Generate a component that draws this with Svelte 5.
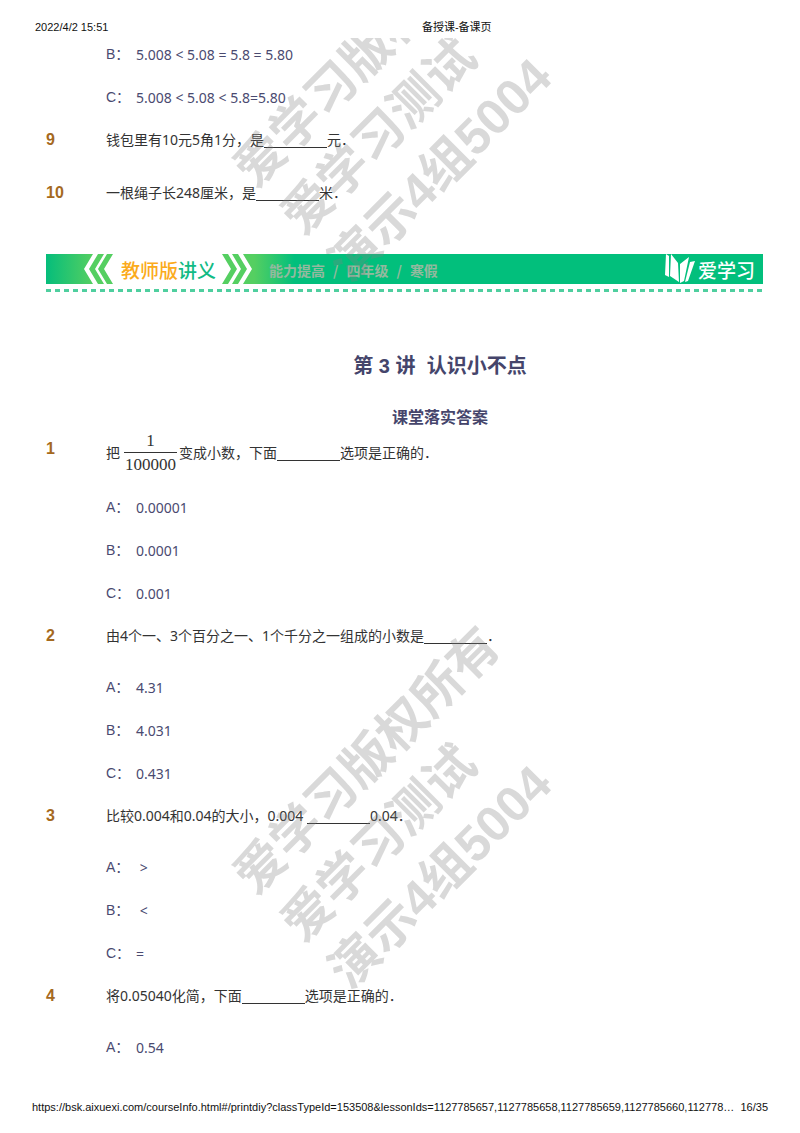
<script>
  const BLANK = { blank: true };

  //The tail of the previous lesson's answers.
  const previous = [
    { options: [['B', '5.008 < 5.08 = 5.8 = 5.80'], ['C', '5.008 < 5.08 < 5.8=5.80']] },
    { number: 9, parts: ['钱包里有10元5角1分，是', BLANK, '元．'] },
    { number: 10, parts: ['一根绳子长248厘米，是', BLANK, '米．'] }
  ];

  const current = [
    {
      number: 1,
      parts: ['把', { top: '1', bottom: '100000' }, '变成小数，下面', BLANK, '选项是正确的．'],
      options: [['A', '0.00001'], ['B', '0.0001'], ['C', '0.001']]
    },
    {
      number: 2,
      parts: ['由4个一、3个百分之一、1个千分之一组成的小数是', BLANK, '．'],
      options: [['A', '4.31'], ['B', '4.031'], ['C', '0.431']]
    },
    {
      number: 3,
      parts: ['比较0.004和0.04的大小，0.004 ', BLANK, '0.04．'],
      options: [['A', '\u00a0>'], ['B', '\u00a0<'], ['C', '=']]
    },
    {
      number: 4,
      parts: ['将0.05040化简，下面', BLANK, '选项是正确的．'],
      options: [['A', '0.54']]
    }
  ];

  const course = ['能力提高', '/', '四年级', '/', '寒假'];
  const url = 'https://bsk.aixuexi.com/courseInfo.html#/printdiy?classTypeId=153508&lessonIds=1127785657,1127785658,1127785659,1127785660,112778…';
</script>

{#snippet questions(list)}
  <ol>
    {#each list as q}
      <li class="item" class:plain={!q.options}>
        {#if q.parts}
          <div class="question">
            <span class="number">{q.number}</span>
            <p>{#each q.parts as part}{#if part.blank}<span class="blank"></span>{:else if part.top}<span class="fraction"><span>{part.top}</span><span class="denominator">{part.bottom}</span></span>{:else}{part}{/if}{/each}</p>
          </div>
        {/if}
        {#if q.options}
          <ul class:first={!q.parts}>
            {#each q.options as [letter, text]}
              <li><span class="letter">{letter}：</span><span>{text}</span></li>
            {/each}
          </ul>
        {/if}
      </li>
    {/each}
  </ol>
{/snippet}

{#snippet watermark()}
  <div class="stamp">爱学习版权所有<br />爱学习测试<br />演示4组5004</div>
{/snippet}

<div class="page">
  <header>
    <span>2022/4/2 15:51</span>
    <span>备授课-备课页</span>
  </header>

  <main>
    {@render questions(previous)}

    <div class="banner">
      <svg class="edge" width="68" height="30" viewBox="0 0 68 30" aria-hidden="true">
        <defs>
          <linearGradient id="fade">
            <stop offset="0" stop-color="#05bd7b" />
            <stop offset="1" stop-color="#55cf61" />
          </linearGradient>
        </defs>
        <path fill="url(#fade)" d="M0 0H47L38 15L47 30H0Z" />
        <path fill="#55cf61" d="M52 0H58L49 15L58 30H52L43 15ZM61 0H67L58 15L67 30H61L52 15Z" />
      </svg>
      <strong class="edition"><em>教师版</em>讲义</strong>
      <svg class="edge" width="32" height="30" viewBox="0 0 32 30" aria-hidden="true">
        <path fill="#55cf61" d="M0 0H6L15 15L6 30H0L9 15ZM10 0H16L25 15L16 30H10L19 15ZM21 0H32V30H21L30 15Z" />
      </svg>
      <div class="bar">
        <span class="course">{#each course as part}<span>{part}</span>{/each}</span>
        <span class="brand">
          <svg width="32" height="30" viewBox="0 0 32 30" aria-hidden="true">
            <path fill="#fff" d="M2 0L5 2V23L1 21ZM7 0L14 9L15 28L6 22ZM16 10L25 3L20 27L16 29ZM26 8L31 7L24 27L21 28Z" />
          </svg>
          爱学习
        </span>
      </div>
    </div>
    <div class="dashes"></div>

    <h1>第 3 讲&nbsp; 认识小不点</h1>
    <h2>课堂落实答案</h2>

    {@render questions(current)}

    <div class="watermarks" aria-hidden="true">
      {@render watermark()}
      {@render watermark()}
    </div>
  </main>

  <footer>
    <span>{url}</span>
    <span>16/35</span>
  </footer>
</div>

<style>
  :global(body) {
    margin: 0;
    background: #fff;
  }

  .page {
    color: #333;
    font: 14px/20px "Noto Sans", "Noto Sans CJK SC", sans-serif;
  }

  header,
  footer {
    color: #111;
    font: 11px/12px "Liberation Sans", "Noto Sans CJK SC", sans-serif;
  }

  header {
    display: grid;
    grid-template-columns: 53% 1fr;
    padding: 21px 35px 0;
  }

  footer {
    display: flex;
    justify-content: space-between;
    padding: 31px 32px 20px;
  }

  main {
    position: relative;
    padding: 0 37px 0 46px;
  }

  ol,
  ul {
    margin: 0;
    padding: 0;
    list-style: none;
  }

  .item {
    padding-bottom: 1px;
  }

  .plain {
    padding-bottom: 13px;
  }

  .question {
    display: grid;
    grid-template-columns: 60px 1fr;
  }

  .number {
    color: #a5691e;
    font: bold 16px/40px "Liberation Sans", sans-serif;
  }

  p {
    margin: 0;
    line-height: 40px;
    white-space: pre-wrap;
  }

  .blank {
    display: inline-block;
    width: 63px;
    height: 16px;
    border-bottom: 1px solid #333;
    vertical-align: -3px;
  }

  /* The numerator's baseline is the one that gets raised. */
  .fraction {
    display: inline-flex;
    flex-direction: column;
    margin: 0 2px 0 4px;
    font: 17px/23px "Liberation Serif", serif;
    text-align: center;
    vertical-align: 12px;
  }

  .denominator {
    padding: 0 1px;
    border-top: 1px solid #333;
  }

  ul {
    margin: 10px 0 0 60px;
    color: #4a4a70;
  }

  ul.first {
    margin-top: 0;
  }

  ul li {
    display: flex;
    line-height: 43px;
  }

  .letter {
    width: 30px;
    font-family: "Liberation Sans", "Noto Sans CJK SC", sans-serif;
  }

  .banner {
    display: flex;
    height: 30px;
    margin-top: 28px;
    font-family: "Noto Sans CJK SC", sans-serif;
    line-height: 32px;
  }

  .edge {
    flex: none;
  }

  .edition {
    flex: none;
    padding: 0 6px 0 7px;
    color: #12bb85;
    font-size: 19px;
    font-weight: 500;
  }

  .edition em {
    color: #fbab1c;
    font-style: normal;
  }

  .bar {
    display: flex;
    flex: 1;
    justify-content: space-between;
    padding: 0 8px 0 15px;
    background: linear-gradient(90deg, #55cf61, #02bf7c 40px);
  }

  .course {
    display: flex;
    gap: 8px;
    color: #93b99f;
    font-weight: bold;
  }

  .brand {
    display: flex;
    gap: 2px;
    color: #fff;
    font-size: 19px;
    font-weight: 500;
  }

  .dashes {
    height: 3px;
    margin-top: 5px;
    background: repeating-linear-gradient(90deg, #4fcf9f 0 5px, transparent 5px 9px);
  }

  h1,
  h2 {
    margin: 0;
    padding-left: 71px;
    color: #45456b;
    font-family: "Liberation Sans", "Noto Sans CJK SC", sans-serif;
    text-align: center;
  }

  h1 {
    margin-top: 59px;
    font-size: 20px;
    line-height: 30px;
  }

  h2 {
    margin-top: 26px;
    font-size: 16px;
    line-height: 22px;
  }

  .watermarks {
    position: absolute;
    inset: 5px 0 0;
    overflow: hidden;
    pointer-events: none;
  }

  .stamp {
    position: absolute;
    top: 116px;
    left: 220px;
    color: rgba(128, 128, 128, 0.3);
    font: bold 50px/67px "Liberation Sans", "Noto Sans CJK SC", sans-serif;
    white-space: nowrap;
    transform: rotate(-45deg);
    transform-origin: 0 0;
  }

  .stamp + .stamp {
    top: 823px;
  }
</style>
